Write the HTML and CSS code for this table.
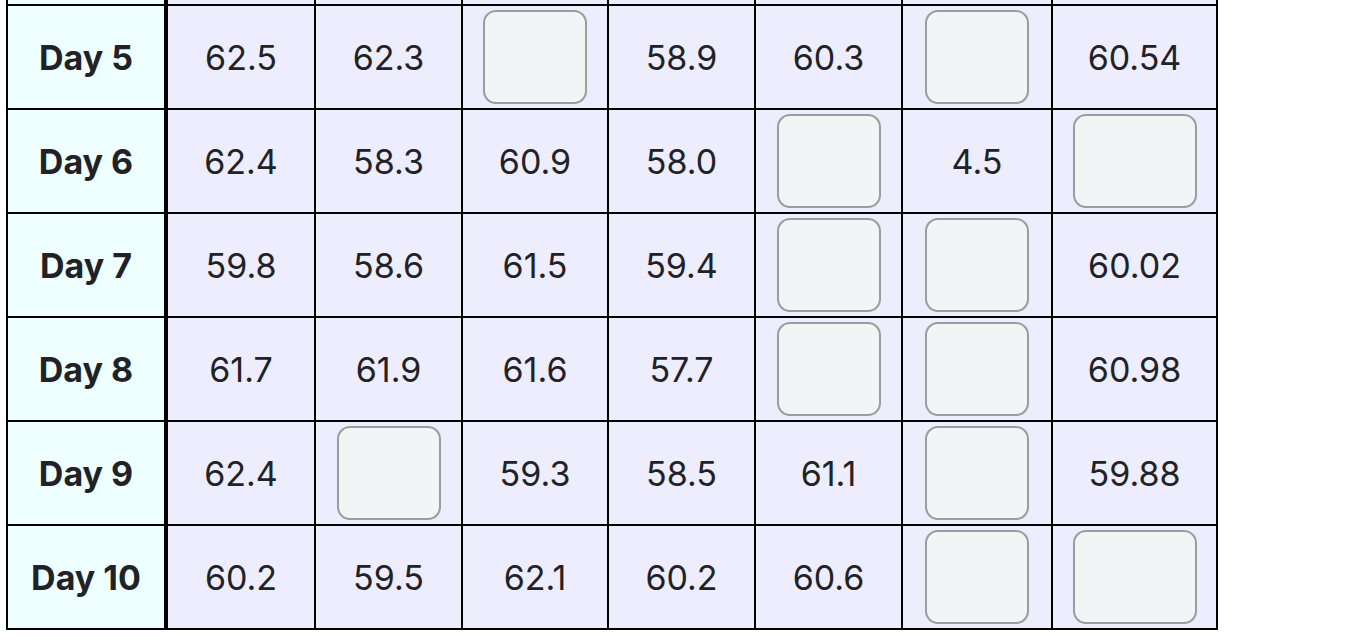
FILE: index.html
```html
<!DOCTYPE html>
<html lang="en">
<head>
<meta charset="utf-8">
<title>Readings</title>
<link rel="stylesheet" href="styles.css">
</head>
<body>
<div class="viewport">
  <table class="grid">
    <colgroup>
      <col class="c-day">
      <col class="c-a">
      <col class="c-b">
      <col class="c-c">
      <col class="c-d">
      <col class="c-e">
      <col class="c-f">
      <col class="c-avg">
    </colgroup>
    <tbody>
      <tr>
        <th class="day">Day 4</th>
        <td>61.2</td><td>60.4</td><td>59.7</td><td><input class="slot" type="text"></td><td>60.8</td><td><input class="slot" type="text"></td><td>60.51</td>
      </tr>
      <tr>
        <th class="day">Day 5</th>
        <td>62.5</td><td>62.3</td><td><input class="slot" type="text"></td><td>58.9</td><td>60.3</td><td><input class="slot" type="text"></td><td>60.54</td>
      </tr>
      <tr>
        <th class="day">Day 6</th>
        <td>62.4</td><td>58.3</td><td>60.9</td><td>58.0</td><td><input class="slot" type="text"></td><td>4.5</td><td><input class="slot wide" type="text"></td>
      </tr>
      <tr>
        <th class="day">Day 7</th>
        <td>59.8</td><td>58.6</td><td>61.5</td><td>59.4</td><td><input class="slot" type="text"></td><td><input class="slot" type="text"></td><td>60.02</td>
      </tr>
      <tr>
        <th class="day">Day 8</th>
        <td>61.7</td><td>61.9</td><td>61.6</td><td>57.7</td><td><input class="slot" type="text"></td><td><input class="slot" type="text"></td><td>60.98</td>
      </tr>
      <tr>
        <th class="day">Day 9</th>
        <td>62.4</td><td><input class="slot" type="text"></td><td>59.3</td><td>58.5</td><td>61.1</td><td><input class="slot" type="text"></td><td>59.88</td>
      </tr>
      <tr>
        <th class="day">Day 10</th>
        <td>60.2</td><td>59.5</td><td>62.1</td><td>60.2</td><td>60.6</td><td><input class="slot" type="text"></td><td><input class="slot wide" type="text"></td>
      </tr>
    </tbody>
  </table>
</div>
</body>
</html>
```

FILE: styles.css
```css
html, body {
  margin: 0;
  height: 100%;
  background: #ffffff;
}

.viewport {
  height: 100vh;
  box-sizing: border-box;
  display: flex;
  flex-direction: column;
  justify-content: flex-end;
  align-items: flex-start;
  overflow: hidden;
  padding: 0 0 8px 6px;
}

.grid {
  flex: none;
  border-collapse: separate;
  border-spacing: 0;
  table-layout: fixed;
  width: 1212px;
  border-left: 2px solid #000;
  border-top: 2px solid #000;
  font-family: Inter, "Noto Sans", "Liberation Sans", sans-serif;
  font-size: 34px;
  color: #202227;
}

.c-day { width: 160px; }
.c-a { width: 148px; }
.c-b { width: 147px; }
.c-c { width: 146px; }
.c-d { width: 147px; }
.c-e { width: 147px; }
.c-f { width: 150px; }
.c-avg { width: 165px; }

.grid td,
.grid th {
  box-sizing: border-box;
  height: 104px;
  padding: 0;
  border-right: 2px solid #000;
  border-bottom: 2px solid #000;
  text-align: center;
  vertical-align: middle;
  background: #eeedfd;
  font-weight: 400;
}

.grid th.day {
  background: #effefe;
  border-right-width: 4px;
  font-weight: 700;
}

.slot {
  display: block;
  box-sizing: border-box;
  width: 104px;
  height: 94px;
  margin: 0 auto;
  padding: 0;
  border: 2px solid #9c9c9c;
  border-radius: 13px;
  background: #f3f4f6;
  font: inherit;
}

.slot.wide {
  width: 124px;
}
```
